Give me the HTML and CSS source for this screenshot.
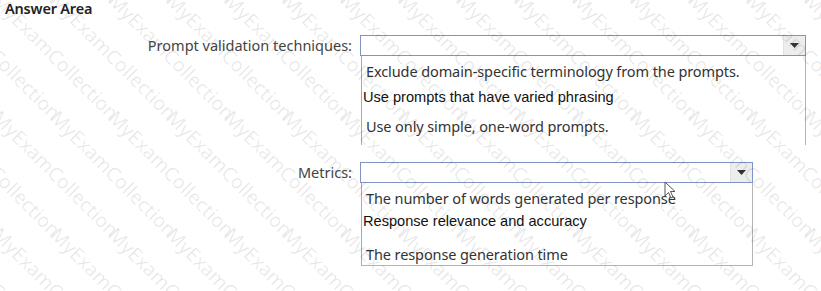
FILE: index.html
```html
<!DOCTYPE html>
<html lang="en">
<head>
  <meta charset="UTF-8">
  <title>Answer Area</title>
  <link rel="stylesheet" href="styles.css">
</head>
<body>

<div class="page">
  <h1 class="title">Answer Area</h1>

  <div class="row">
    <div class="label">Prompt validation techniques:</div>
    <div class="field wide">
      <div class="select">
        <span class="arrow"><svg width="9" height="5" viewBox="0 0 9 5"><path d="M0 0h9L4.5 5z" fill="#333"/></svg></span>
      </div>
      <ul class="options open">
        <li class="opt-1">Exclude domain-specific terminology from the prompts.</li>
        <li class="opt-2 arial">Use prompts that have varied phrasing</li>
        <li class="opt-3">Use only simple, one-word prompts.</li>
      </ul>
    </div>
  </div>

  <div class="row second">
    <div class="label">Metrics:</div>
    <div class="field narrow">
      <div class="select">
        <span class="arrow"><svg width="9" height="5" viewBox="0 0 9 5"><path d="M0 0h9L4.5 5z" fill="#333"/></svg></span>
      </div>
      <ul class="options closed">
        <li class="opt-1">The number of words generated per response</li>
        <li class="opt-2 arial">Response relevance and accuracy</li>
        <li class="opt-3">The response generation time</li>
      </ul>
      <svg class="cursor" width="12" height="19" viewBox="0 0 12 19">
        <path d="M1 1v14l3.5-3.5 2.5 5.5 2-1-2.5-5.5H11z" fill="#fff" stroke="#555" stroke-width="1"/>
      </svg>
    </div>
  </div>
</div>

<!-- site watermark tiles -->
<div class="watermark">
  <div class="wm-grid">
    <span>MyExamCollection</span><span>MyExamCollection</span><span>MyExamCollection</span><span>MyExamCollection</span><span>MyExamCollection</span><span>MyExamCollection</span><span>MyExamCollection</span><span>MyExamCollection</span><span>MyExamCollection</span><span>MyExamCollection</span><span>MyExamCollection</span><span>MyExamCollection</span><span>MyExamCollection</span><span>MyExamCollection</span><span>MyExamCollection</span><span>MyExamCollection</span><span>MyExamCollection</span>
    <span>MyExamCollection</span><span>MyExamCollection</span><span>MyExamCollection</span><span>MyExamCollection</span><span>MyExamCollection</span><span>MyExamCollection</span><span>MyExamCollection</span><span>MyExamCollection</span><span>MyExamCollection</span><span>MyExamCollection</span><span>MyExamCollection</span><span>MyExamCollection</span><span>MyExamCollection</span><span>MyExamCollection</span><span>MyExamCollection</span><span>MyExamCollection</span><span>MyExamCollection</span>
    <span>MyExamCollection</span><span>MyExamCollection</span><span>MyExamCollection</span><span>MyExamCollection</span><span>MyExamCollection</span><span>MyExamCollection</span><span>MyExamCollection</span><span>MyExamCollection</span><span>MyExamCollection</span><span>MyExamCollection</span><span>MyExamCollection</span><span>MyExamCollection</span><span>MyExamCollection</span><span>MyExamCollection</span><span>MyExamCollection</span><span>MyExamCollection</span><span>MyExamCollection</span>
    <span>MyExamCollection</span><span>MyExamCollection</span><span>MyExamCollection</span><span>MyExamCollection</span><span>MyExamCollection</span><span>MyExamCollection</span><span>MyExamCollection</span><span>MyExamCollection</span><span>MyExamCollection</span><span>MyExamCollection</span><span>MyExamCollection</span><span>MyExamCollection</span><span>MyExamCollection</span><span>MyExamCollection</span><span>MyExamCollection</span><span>MyExamCollection</span><span>MyExamCollection</span>
  </div>
</div>

</body>
</html>
```

FILE: styles.css
```css
* {
  box-sizing: border-box;
}

html, body {
  margin: 0;
  height: 100%;
  overflow: hidden;
}

body {
  position: relative;
  background-color: #fff;
  font-family: "Noto Sans", "Open Sans", sans-serif;
  color: #333;
}

.page {
  padding: 0 0 0 5px;
}

.title {
  margin: 0;
  height: 35px;
  font-size: 14.5px;
  font-weight: 600;
  color: #222;
  line-height: 17px;
  letter-spacing: -0.2px;
}

.row {
  display: grid;
  grid-template-columns: 347px auto;
  column-gap: 8px;
  align-items: start;
}

.row.second {
  margin-top: 17px;
}

.label {
  text-align: right;
  font-size: 14.5px;
  line-height: 21px;
  color: #444;
}

.field {
  position: relative;
}

.field.wide {
  width: 446px;
}

.field.narrow {
  width: 393px;
}

/* the closed combo box */
.select {
  height: 21px;
  border: 1px solid #7f93c6;
  background-color: #fff;
  display: flex;
  justify-content: flex-end;
}

.arrow {
  width: 22px;
  display: flex;
  align-items: center;
  justify-content: center;
  background-color: #ededed;
  border-left: 1px solid #e2e2e2;
}

/* option lists below the boxes */
.options {
  list-style: none;
  margin: 0 0 0 1px;
  padding: 0;
  border-left: 1px solid #a9a9a9;
  border-right: 1px solid #b4b4b4;
}

.options.open {
  height: 89px;
}

.options.closed {
  height: 83px;
  border-bottom: 1px solid #b4b4b4;
}

.options li {
  font-size: 14.5px;
  line-height: 20px;
  color: #333;
  padding-left: 4px;
  letter-spacing: -0.1px;
}

.options li.arial {
  font-family: "Liberation Sans", Arial, sans-serif;
  font-size: 14.6px;
  color: #111;
  padding-left: 1px;
  letter-spacing: 0;
}

.open .opt-1 { padding-top: 5px; }
.open .opt-2 { margin-top: 6px; }
.open .opt-3 { margin-top: 9px; }

.closed .opt-1 { padding-top: 5px; }
.closed .opt-2 { margin-top: 3px; }
.closed .opt-3 { margin-top: 13px; }

.cursor {
  position: absolute;
  left: 304px;
  top: 19px;
}

/* diagonal watermark laid over the whole page */
.watermark {
  position: absolute;
  inset: 0;
  overflow: hidden;
  pointer-events: none;
}

.wm-grid {
  position: absolute;
  left: -113px;
  top: -127px;
  display: grid;
  grid-template-columns: repeat(17, 58px);
  grid-auto-rows: 117px;
}

.wm-grid span {
  display: block;
  width: 58px;
  white-space: nowrap;
  font-family: "Noto Sans", sans-serif;
  font-size: 19.5px;
  line-height: 19px;
  color: rgba(0, 0, 0, 0.09);
  transform: rotate(45deg);
  transform-origin: 0 0;
}
```
